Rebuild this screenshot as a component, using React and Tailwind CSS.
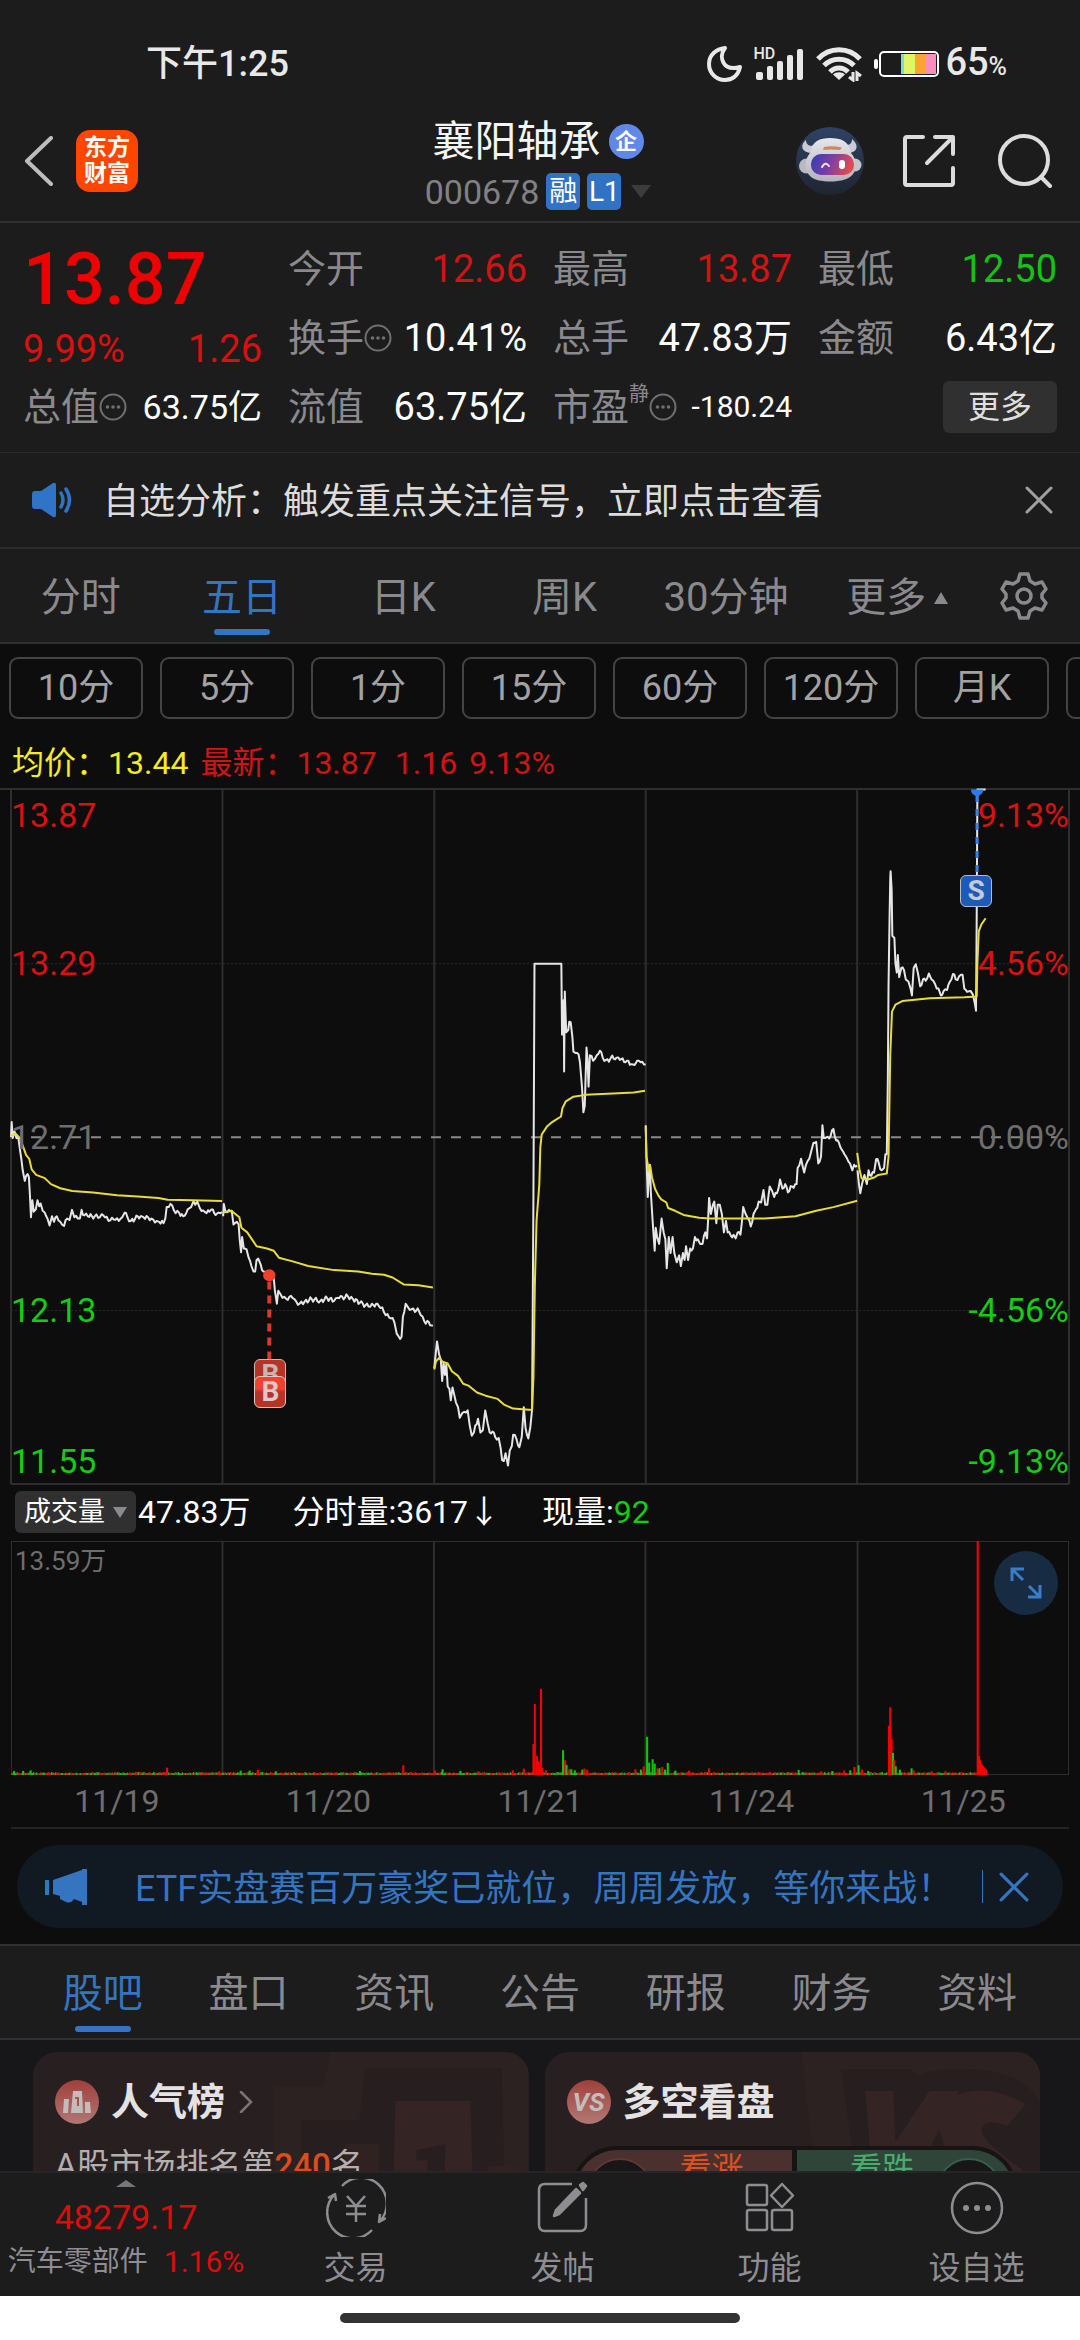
import React from "react";

/* ---------- price chart data (x: 32..3104, y: 21..1532) ---------- */

const PRICE_DAYS = [
  "32,778 34,745 37,780 42,765 48,780 53,778 58,805 62,825 66,850 72,873 76,862 80,858 84,865 87,905 90,952 94,915 98,940 104,935 109,915 114,928 118,922 124,938 130,942 138,955 144,970 151,950 157,962 165,950 175,962 186,971 195,955 202,958 209,936 216,952 226,955 232,955 237,936 245,948 255,950 275,950 290,952 300,948 315,960 330,957 345,960 355,952 362,942 370,952 380,960 392,956 400,950 412,950 430,952 445,957 455,960 462,962 475,965 480,955 484,930 490,930 495,923 505,937 520,942 532,950 545,935 555,930 562,917 567,925 573,918 580,932 590,937 600,943 608,940 614,935 622,943 635,942 645,941",
  "648,950 650,923 654,938 665,936 673,938 678,968 682,965 688,962 693,968 696,1000 700,1028 703,995 708,1020 716,1022 722,1040 730,1058 736,1070 741,1070 745,1045 750,1042 757,1055 765,1070 775,1080 785,1080 795,1085 798,1110 804,1140 808,1112 815,1120 825,1125 832,1130 840,1125 850,1128 860,1135 870,1140 885,1135 905,1130 930,1134 950,1128 970,1134 985,1128 1010,1124 1025,1130 1045,1138 1070,1146 1080,1140 1100,1145 1110,1148 1120,1165 1135,1172 1145,1180 1152,1205 1158,1212 1166,1212 1170,1168 1178,1140 1185,1148 1195,1152 1205,1158 1213,1150 1222,1165 1232,1178 1245,1180 1257,1188",
  "1261,1280 1265,1250 1269,1222 1275,1250 1280,1262 1284,1308 1288,1268 1292,1295 1296,1272 1300,1320 1305,1325 1309,1350 1314,1322 1318,1335 1324,1355 1330,1365 1335,1388 1342,1378 1348,1375 1358,1372 1364,1405 1370,1427 1376,1420 1380,1405 1388,1390 1395,1420 1402,1415 1409,1372 1416,1400 1422,1420 1430,1418 1438,1430 1448,1432 1454,1455 1458,1480 1463,1482 1468,1465 1475,1492 1480,1460 1486,1450 1490,1425 1500,1435 1508,1452 1515,1430 1521,1365 1526,1410 1534,1433 1540,1408 1545,1370 1549,900 1552,401 1630,401 1632,555 1634,555 1637,480 1638,635 1640,461 1644,550 1650,545 1653,527 1657,528 1662,560 1665,592 1672,595 1680,598 1684,615 1690,670 1694,724 1698,710 1703,583 1706,610 1709,668 1713,600 1718,602 1722,612 1727,608 1733,600 1742,590 1750,605 1760,610 1768,614 1774,605 1790,605 1800,610 1820,612 1838,620 1850,612 1860,615 1870,620 1875,620",
  "1875,752 1877,820 1881,908 1885,850 1887,838 1890,900 1895,960 1901,1025 1904,975 1908,995 1914,1010 1921,955 1927,985 1932,1000 1936,1063 1942,995 1947,1030 1953,995 1958,1030 1965,1050 1972,1035 1977,1058 1983,1030 1988,1045 1992,1015 1998,1045 2004,1020 2012,1020 2018,995 2026,1000 2033,1010 2040,1010 2048,985 2053,998 2056,960 2059,910 2064,945 2070,925 2074,918 2080,965 2084,925 2090,925 2096,945 2102,985 2108,960 2113,985 2122,992 2130,990 2136,998 2142,985 2150,990 2158,930 2165,945 2172,955 2180,972 2188,945 2195,935 2203,918 2210,920 2217,893 2222,925 2228,925 2235,885 2242,895 2248,908 2256,900 2265,870 2272,890 2280,880 2288,898 2300,885 2313,880 2316,845 2326,825 2335,855 2345,830 2355,810 2362,790 2370,788 2376,835 2384,820 2388,752 2392,780 2400,778 2412,775 2420,760 2428,785 2436,790 2444,805 2452,815 2460,825 2468,835 2475,850 2480,838 2489,840",
  "2490,850 2494,880 2498,900 2503,880 2510,860 2517,880 2522,850 2530,862 2538,855 2544,826 2552,835 2560,850 2567,845 2571,815 2575,815 2578,650 2580,450 2583,300 2585,215 2586,200 2589,240 2591,340 2597,345 2600,400 2604,420 2607,382 2611,430 2617,410 2625,415 2630,435 2638,440 2644,455 2648,470 2653,410 2659,402 2665,420 2672,450 2680,435 2688,438 2697,422 2705,435 2715,445 2725,455 2732,470 2740,460 2750,458 2758,440 2767,423 2775,435 2785,428 2795,425 2800,455 2808,462 2818,460 2825,468 2830,485 2834,503 2836,300 2838,22 2862,22",
];

const AVG_DAYS = [
  "32,775 45,770 58,780 68,800 76,817 85,825 92,848 105,860 130,867 148,880 175,889 210,895 270,898 340,904 400,907 460,910 487,914 560,915 645,917",
  "648,942 672,938 695,952 701,975 718,985 745,1015 775,1020 795,1025 810,1040 850,1048 895,1058 970,1067 1040,1070 1080,1075 1115,1077 1140,1083 1172,1098 1215,1100 1257,1105",
  "1261,1283 1266,1265 1275,1258 1285,1266 1300,1270 1312,1287 1330,1297 1345,1314 1360,1318 1385,1333 1410,1340 1445,1347 1465,1360 1490,1368 1545,1371 1549,1300 1553,1100 1558,960 1566,880 1569,800 1573,772 1588,755 1600,747 1610,742 1629,733 1633,715 1643,700 1665,690 1700,686 1780,683 1840,681 1873,677",
  "1875,755 1877,820 1884,850 1888,840 1893,865 1902,890 1912,905 1920,913 1935,920 1940,932 1960,938 1985,947 2030,953 2060,955 2120,955 2220,955 2310,950 2370,938 2420,930 2489,916",
  "2489,812 2496,850 2502,868 2520,870 2540,865 2550,860 2575,857 2580,820 2585,600 2590,505 2600,490 2620,482 2700,476 2800,474 2836,472 2838,400 2842,330 2850,315 2862,302",
];

/* Small deterministic ripple between the recorded points of the price line. */
function ripple(series) {
  const pts = series.split(" ").map((p) => p.split(",").map(Number));
  const out = [pts[0]];
  for (let i = 1; i < pts.length; i++) {
    const [x0, y0] = pts[i - 1];
    const [x1, y1] = pts[i];
    const n = y0 === y1 && x1 - x0 > 20 && y0 < 500 ? 1 : Math.floor((x1 - x0) / 4);
    for (let k = 1; k < n; k++) {
      const wob = Math.sin((x0 + k * 4) * 12.9898) * 5;
      out.push([x0 + ((x1 - x0) * k) / n, y0 + ((y1 - y0) * k) / n + wob]);
    }
    out.push([x1, y1]);
  }
  return out.map((p) => p.map((v) => Math.round(v * 10) / 10).join(",")).join(" ");
}

/* ---------- volume data (x: 16..1552, y: 184..882) ---------- */

const UP = "#f00505";
const DOWN = "#12c412";
const VOLUME_PEAKS = [
  [20, 870, DOWN], [33, 870, DOWN], [44, 868, DOWN], [242, 860, UP], [318, 871, UP], [349, 869, DOWN], [362, 869, DOWN],
  [374, 867, UP], [400, 871, DOWN], [522, 870, DOWN], [585, 853, UP], [631, 869, UP], [642, 865, DOWN], [668, 870, DOWN],
  [694, 871, UP], [744, 868, UP], [760, 863, UP], [774, 790, UP], [776, 670, UP], [779, 825, UP], [781, 840, UP],
  [783, 858, UP], [785, 625, UP], [787, 860, UP], [792, 868, UP], [817, 808, DOWN], [820, 838, UP], [822, 852, DOWN],
  [826, 865, UP], [829, 865, DOWN], [834, 868, DOWN], [845, 866, DOWN], [848, 863, UP], [852, 866, UP], [922, 865, UP],
  [930, 866, DOWN], [934, 856, UP], [939, 768, DOWN], [942, 845, DOWN], [947, 835, DOWN], [950, 848, DOWN], [954, 862, UP],
  [957, 862, DOWN], [961, 858, UP], [965, 866, DOWN], [969, 846, DOWN], [980, 869, DOWN], [1000, 869, UP], [1029, 862, UP],
  [1159, 867, DOWN], [1192, 871, UP], [1208, 870, DOWN], [1225, 869, UP], [1234, 868, DOWN], [1240, 858, UP],
  [1246, 853, DOWN], [1251, 866, UP], [1260, 870, DOWN], [1290, 735, UP], [1292, 680, UP], [1294, 775, UP],
  [1296, 816, DOWN], [1298, 838, UP], [1300, 856, DOWN], [1306, 866, DOWN], [1323, 862, DOWN], [1326, 868, UP],
  [1352, 871, UP], [1372, 871, UP], [1419, 184, UP], [1421, 825, UP], [1423, 838, UP], [1425, 850, UP], [1427, 855, UP],
  [1429, 860, UP], [1431, 865, UP],
];

const BASE_BARS = Array.from({ length: 703 }, (_, i) => {
  const n = Math.abs(Math.sin(i * 78.233) * 43758.5453) % 1;
  const h = 6 + Math.round(n * n * 3);
  return { x: 16 + i * 2, h, c: (n * 10) % 1 > 0.6 ? "#38a814" : "#d0240a" };
});

/* ---------- small shared icons ---------- */

function Close({ className }) {
  return (
    <svg viewBox="0 0 28 28" className={className} fill="none" stroke="currentColor" strokeWidth="3" strokeLinecap="round" aria-hidden="true">
      <path d="M2 2 26 26M26 2 2 26" />
    </svg>
  );
}

function Info() {
  return (
    <svg viewBox="0 0 28 28" className="size-7 shrink-0 text-[#707072]" aria-hidden="true">
      <circle cx="14" cy="14" r="12.5" fill="none" stroke="currentColor" strokeWidth="2" />
      <g fill="currentColor">
        <circle cx="8.5" cy="14" r="1.8" />
        <circle cx="14" cy="14" r="1.8" />
        <circle cx="19.5" cy="14" r="1.8" />
      </g>
    </svg>
  );
}

/* ---------- sections ---------- */

function StatusBar() {
  return (
    <div className="flex h-[100px] items-center justify-between pt-7 pr-[73px] pl-[146px] text-[#e8e8e8]">
      <span className="text-[36px] leading-[44px] font-medium">下午1:25</span>
      <div className="flex items-center">
        <svg viewBox="0 0 36 36" className="mr-[10px] size-9" fill="none" stroke="currentColor" strokeWidth="4" strokeLinejoin="round" aria-hidden="true">
          <path d="M18 2C11 11 16 26 33 21C31 30 25 34 18 34C9 34 2 27 2 18C2 9 9 3 18 2Z" />
        </svg>
        <div className="relative h-9 w-[52px]">
          <span className="absolute top-0 left-0 text-[16px] leading-4 font-medium">HD</span>
          <svg viewBox="0 0 52 36" className="h-9 w-[52px]" fill="currentColor" aria-hidden="true">
            <rect x="3" y="26" width="7" height="8" rx="2" />
            <rect x="14" y="20" width="6" height="14" rx="2" />
            <rect x="24" y="15" width="6" height="19" rx="2" />
            <rect x="34" y="9" width="6" height="25" rx="2" />
            <rect x="44" y="3" width="6" height="31" rx="2" />
          </svg>
        </div>
        <svg viewBox="0 0 46 36" className="mr-[12px] ml-[11px] h-9 w-[46px]" aria-hidden="true">
          <g fill="none" stroke="currentColor" strokeWidth="5">
            <path d="M2 13C13 .5 33 .5 44 13" />
            <path d="M8 19.500C16 11 30 11 38 19.500" />
            <path d="M14 26C19 20.500 27 20.500 32 26" />
          </g>
          <path d="M23 34 17 28.500C20 25.500 26 25.500 29 28.500Z" fill="currentColor" />
          <path d="M37 26V34L33 31M41 35V27L45 30" fill="none" stroke="currentColor" strokeWidth="3" />
        </svg>
        <svg viewBox="0 0 66 28" className="h-7 w-[66px]" aria-hidden="true">
          <rect x="0" y="9" width="4" height="10" rx="2" fill="#fff" />
          <rect x="6" y="2" width="58" height="24" rx="4" fill="none" stroke="#fff" strokeWidth="2" />
          <rect x="27" y="4" width="3" height="20" fill="#6fe3d2" />
          <rect x="30" y="4" width="11" height="20" fill="#e2f564" />
          <rect x="41" y="4" width="11" height="20" fill="#f9a52f" />
          <rect x="52" y="4" width="10" height="20" fill="#f78fbe" />
        </svg>
        <span className="ml-[5px] text-[38px] leading-[44px] font-medium">
          65<span className="text-[25px]">%</span>
        </span>
      </div>
    </div>
  );
}

function Mascot() {
  return (
    <svg viewBox="0 0 68 68" className="size-[68px]" aria-hidden="true">
      <defs>
        <linearGradient id="mascot-bg" x1="0" y1="0" x2="0" y2="1">
          <stop offset="0" stopColor="#2f4266" />
          <stop offset="1" stopColor="#1f2530" />
        </linearGradient>
        <linearGradient id="mascot-visor" x1="0" y1="0" x2="1" y2="0.2">
          <stop offset="0" stopColor="#2f3fb0" />
          <stop offset="0.5" stopColor="#7b3da8" />
          <stop offset="1" stopColor="#e04a50" />
        </linearGradient>
        <linearGradient id="mascot-head" x1="0" y1="0" x2="0" y2="1">
          <stop offset="0" stopColor="#e6e6ec" />
          <stop offset="1" stopColor="#b4b2ba" />
        </linearGradient>
      </defs>
      <circle cx="34" cy="34" r="34" fill="url(#mascot-bg)" />
      <path d="M10 13C5 17 4 24 14 26L20 18C14 20 10 18 10 13ZM56 12C62 17 63 24 54 26L47 17C53 19 56 17 56 12Z" fill="#c9cad4" />
      <circle cx="10.500" cy="39" r="7.500" fill="#b9b9c2" />
      <circle cx="59" cy="38" r="6.500" fill="#c4c4cc" />
      <path d="M14 26C16 14 24 11 34 11C45 11 53 14 55 26C62 33 61 46 54 50C46 56 22 56 15 50C8 44 8 33 14 26Z" fill="url(#mascot-head)" />
      <path d="M28 20Q36 18.500 46 20.500L44 23Q35 22 27 23Z" fill="#c98b5c" />
      <rect x="15" y="27" width="43" height="21" rx="10" fill="url(#mascot-visor)" />
      <path d="M26 40Q29.500 34 33 39" fill="none" stroke="#f4e8ff" strokeWidth="2" strokeLinecap="round" />
      <rect x="43" y="33" width="6" height="9" rx="3" fill="#fff" />
    </svg>
  );
}

function Header() {
  return (
    <header className="grid h-[123px] grid-cols-[1fr_auto_1fr] items-center border-b-2 border-[#303030] pr-7 pl-6">
      <div className="flex items-center gap-[22px]">
        <button aria-label="返回" className="text-[#bdbdbd]">
          <svg viewBox="0 0 30 50" className="h-[50px] w-[30px]" fill="none" stroke="currentColor" strokeWidth="4" strokeLinecap="round" strokeLinejoin="round" aria-hidden="true">
            <path d="M27 2 3 25 27 48" />
          </svg>
        </button>
        <a href="#home" className="flex size-[62px] flex-col items-center justify-center rounded-[14px] bg-[#ff4600] text-[23px] leading-[26px] font-bold text-white">
          <span>东方</span>
          <span>财富</span>
        </a>
      </div>
      <div className="flex flex-col items-center pt-2">
        <h1 className="flex items-center gap-2 text-[42px] leading-[54px] text-[#f4f4f4]">
          襄阳轴承
          <span className="flex size-[35px] items-center justify-center rounded-full bg-[#5f88e8] text-[22px] leading-none font-bold text-white">企</span>
        </h1>
        <div className="flex items-center gap-[7px] text-[34px] leading-[46px] text-[#808085]">
          000678
          <span className="flex h-[37px] w-[34px] items-center justify-center rounded-[5px] bg-[#3072c4] text-[28px] leading-none text-white">融</span>
          <span className="flex h-[37px] w-[34px] items-center justify-center rounded-[5px] bg-[#3072c4] text-[28px] leading-none text-white">L1</span>
          <svg viewBox="0 0 20 13" className="ml-[3px] h-[13px] w-5" fill="#3c3c3c" aria-hidden="true">
            <path d="M0 0H20L10 13Z" />
          </svg>
        </div>
      </div>
      <div className="flex items-center justify-end text-[#dcdcdc]">
        <button aria-label="智能助手" className="mr-[38px]">
          <Mascot />
        </button>
        <button aria-label="分享" className="mr-[42px]">
          <svg viewBox="0 0 54 54" className="size-[54px]" fill="none" stroke="currentColor" strokeWidth="4" strokeLinecap="round" strokeLinejoin="round" aria-hidden="true">
            <path d="M21 3H5Q3 3 3 5V49Q3 51 5 51H49Q51 51 51 49V34M33 3H51V20M51 3 25 29" />
          </svg>
        </button>
        <button aria-label="搜索">
          <svg viewBox="0 0 54 54" className="size-[54px]" fill="none" stroke="currentColor" strokeWidth="4" strokeLinecap="round" aria-hidden="true">
            <circle cx="26" cy="26" r="24" />
            <path d="M43 43 52 52" />
          </svg>
        </button>
      </div>
    </header>
  );
}

function Stat({ label, info, sup, value, tone = "text-white", size = "text-[38px]" }) {
  return (
    <div className="flex items-center justify-between whitespace-nowrap">
      <dt className="flex items-center text-[38px] text-[#8a8a8e]">
        {label}
        {sup && <sup className="top-0 self-start text-[20px] leading-5">{sup}</sup>}
        {info && <Info />}
      </dt>
      <dd className={`${size} ${tone}`}>{value}</dd>
    </div>
  );
}

function Quote() {
  return (
    <dl className="grid auto-rows-[69px] grid-cols-4 gap-x-[26px] border-b border-[#2c2c2c] px-[23px] pt-[11px] pb-[11px] leading-[46px]">
      <div className="row-span-2 text-[#e60606]">
        <dd className="text-[72px] leading-[92px] font-medium text-[#f00000]">13.87</dd>
        <dd className="flex justify-between text-[38px] text-[#d81010]">
          <span>9.99%</span>
          <span>1.26</span>
        </dd>
      </div>
      <Stat label="今开" value="12.66" tone="text-[#d01414]" />
      <Stat label="最高" value="13.87" tone="text-[#d01414]" />
      <Stat label="最低" value="12.50" tone="text-[#14c414]" />
      <Stat label="换手" info value="10.41%" />
      <Stat label="总手" value="47.83万" />
      <Stat label="金额" value="6.43亿" />
      <Stat label="总值" info value="63.75亿" size="text-[34px]" />
      <Stat label="流值" value="63.75亿" />
      <Stat label="市盈" sup="静" info value="-180.24" size="text-[30px]" />
      <div className="flex items-center justify-end">
        <button className="h-[52px] w-[114px] rounded-[6px] bg-[#303030] text-[32px] text-[#dedede]">更多</button>
      </div>
    </dl>
  );
}

function Notice() {
  return (
    <div className="flex h-[96px] items-center border-b-2 border-[#2c2c2c] pr-[27px] pl-[31px]">
      <svg viewBox="0 0 42 36" className="h-9 w-[42px]" aria-hidden="true">
        <path d="M4 9H10L22 1Q25 0 25 3V33Q25 36 22 35L10 27H4Q1 27 1 24V12Q1 9 4 9Z" fill="#2f74c6" />
        <path d="M30 11Q34 18 30 25M35 7Q42 18 35 29" fill="none" stroke="#2f74c6" strokeWidth="3.500" strokeLinecap="round" />
      </svg>
      <p className="ml-[30px] flex-1 pt-1 text-[36px] leading-[48px] text-[#dcdcdc]">自选分析：触发重点关注信号，立即点击查看</p>
      <button aria-label="关闭提示" className="text-[#a0a0a0]">
        <Close className="size-7" />
      </button>
    </div>
  );
}

function PeriodTabs() {
  const tabs = ["分时", "五日", "日K", "周K", "30分钟"];
  return (
    <nav className="grid h-[95px] grid-cols-[repeat(6,1fr)_112px] border-b-2 border-[#303030] text-[40px] text-[#8a8a8e]">
      {tabs.map((t) => (
        <button key={t} className={`relative flex items-center justify-center pt-1 ${t === "五日" ? "text-[#3475c2]" : ""}`}>
          {t}
          {t === "五日" && <span className="absolute bottom-[7px] h-[6px] w-14 rounded-full bg-[#3475c2]" />}
        </button>
      ))}
      <button className="flex items-center justify-center gap-2 pt-1 pl-5">
        更多
        <svg viewBox="0 0 14 12" className="h-3 w-[14px]" fill="currentColor" aria-hidden="true">
          <path d="M7 0 14 12H0Z" />
        </svg>
      </button>
      <button aria-label="设置" className="flex items-center justify-center">
        <svg viewBox="0 0 48 48" className="size-12" fill="none" stroke="currentColor" strokeWidth="3.500" strokeLinejoin="round" aria-hidden="true">
          <path d="M20 2H28L30 9L35 12L42 10L46 17L42 22V26L46 31L42 38L35 36L30 39L28 46H20L18 39L13 36L6 38L2 31L6 26V22L2 17L6 10L13 12L18 9Z" />
          <circle cx="24" cy="24" r="7" />
        </svg>
      </button>
    </nav>
  );
}

function Intervals() {
  return (
    <div className="flex gap-[17px] overflow-hidden pt-[13px] pl-[9px] text-[36px] leading-none text-[#a2a2a4]">
      {["10分", "5分", "1分", "15分", "60分", "120分", "月K"].map((t) => (
        <button key={t} className="h-[62px] w-[134px] shrink-0 rounded-[9px] border-2 border-[#444444]">
          {t}
        </button>
      ))}
      <button aria-label="更多周期" className="h-[62px] w-[134px] shrink-0 rounded-[9px] border-2 border-[#444444]" />
    </div>
  );
}

function PriceChart() {
  return (
    <div className="relative mx-[11px] h-[695px] text-[34px] leading-10">
      <svg viewBox="32 21 3072 1511" preserveAspectRatio="none" className="absolute inset-0 h-full w-full overflow-visible" fill="none" role="img" aria-label="五日走势">
        <g stroke="#2e2e2e" strokeWidth="2">
          <path d="M0 21H3136M32 1532H3104M32 21V1532M646 21V1532M1261 21V1532M1875 21V1532M2489 21V1532M3104 21V1532" vectorEffect="non-scaling-stroke" />
        </g>
        <path d="M32 401H3104M32 1155H3104" stroke="#2c2c2c" strokeWidth="1" strokeDasharray="2 2" vectorEffect="non-scaling-stroke" />
        <path d="M90 778H3070" stroke="#8a8a8a" strokeWidth="2" strokeDasharray="10 10" vectorEffect="non-scaling-stroke" />
        {PRICE_DAYS.map((d, i) => (
          <polyline key={i} points={ripple(d)} stroke="#e6e6e6" strokeWidth="2" strokeLinejoin="round" vectorEffect="non-scaling-stroke" />
        ))}
        {AVG_DAYS.map((d, i) => (
          <polyline key={i} points={d} stroke="#e8dc3c" strokeWidth="2" strokeLinejoin="round" vectorEffect="non-scaling-stroke" />
        ))}
        <path d="M782 1092V1262" stroke="#d83a2c" strokeWidth="4" strokeDasharray="8 6" vectorEffect="non-scaling-stroke" />
        <ellipse cx="782" cy="1078" rx="18" ry="13" fill="#f0402c" />
        <path d="M2837 34V207" stroke="#3b82e6" strokeWidth="3" strokeDasharray="7 7" vectorEffect="non-scaling-stroke" />
        <path d="M2819 22A18 14 0 0 0 2855 22Z" fill="#2a7af0" />
      </svg>

      <span className="absolute top-[6px] left-0 text-[#d81212]">13.87</span>
      <span className="absolute top-1/4 left-0 -translate-y-1/2 text-[#d81212]">13.29</span>
      <span className="absolute top-1/2 left-0 -translate-y-1/2 text-[#6e6e6e]">12.71</span>
      <span className="absolute top-3/4 left-0 -translate-y-1/2 text-[#14cc14]">12.13</span>
      <span className="absolute bottom-[3px] left-0 text-[#14cc14]">11.55</span>
      <span className="absolute top-[6px] right-0 text-[#d81212]">9.13%</span>
      <span className="absolute top-1/4 right-0 -translate-y-1/2 text-[#d81212]">4.56%</span>
      <span className="absolute top-1/2 right-0 -translate-y-1/2 text-[#6e6e6e]">0.00%</span>
      <span className="absolute top-3/4 right-0 -translate-y-1/2 text-[#14cc14]">-4.56%</span>
      <span className="absolute right-0 bottom-[3px] text-[#14cc14]">-9.13%</span>

      <span className="absolute top-[82%] left-[23%] flex h-8 w-8 items-center justify-center rounded-[6px] border border-[#c9b8b6] bg-[#b83226] text-[28px] leading-none font-bold text-[#c8b4b2]">B</span>
      <span className="absolute top-[84.400%] left-[23%] flex h-8 w-8 items-center justify-center rounded-[6px] border border-[#e0c8c6] bg-linear-to-b from-[#f04030] from-40% to-[#b83226] to-50% text-[28px] leading-none font-bold text-[#dccaca]">B</span>
      <span className="absolute top-[12.400%] left-[90%] flex h-8 w-8 -translate-x-[3px] items-center justify-center rounded-[6px] border border-[#b4bccb] bg-[#1c5cb8] text-[28px] leading-none font-bold text-[#c4cad6]">S</span>
    </div>
  );
}

function VolumeChart() {
  return (
    <div className="mx-[11px]">
      <div className="relative h-[234px]">
        <svg viewBox="16 184 1536 698" preserveAspectRatio="none" className="absolute inset-0 h-full w-full" role="img" aria-label="成交量">
          <path d="M16 184H1552V882H16ZM323 184V882M630 184V882M937 184V882M1245 184V882" fill="none" stroke="#2e2e2e" strokeWidth="2" vectorEffect="non-scaling-stroke" />
          {BASE_BARS.map((b) => (
            <rect key={b.x} x={b.x} y={882 - b.h} width="2" height={b.h} fill={b.c} />
          ))}
          {VOLUME_PEAKS.map(([x, y, c]) => (
            <rect key={x} x={x - 1} y={y} width="3" height={882 - y} fill={c} />
          ))}
        </svg>
        <span className="absolute top-1 left-1 text-[26px] leading-8 text-[#6e6e6e]">13.59万</span>
        <button aria-label="全屏" className="absolute top-[10px] right-[11px] flex size-[64px] items-center justify-center rounded-full bg-[#172b42] text-[#3a7cc8]">
          <svg viewBox="0 0 32 32" className="size-8" fill="none" stroke="currentColor" strokeWidth="3" aria-hidden="true">
            <path d="M2 14V2H14M2 2 13 13M30 18V30H18M30 30 19 19" />
          </svg>
        </button>
      </div>
      <div className="grid h-[54px] grid-cols-5 items-center border-b-2 border-[#242424] text-center text-[32px] leading-10 text-[#6e6e6e]">
        {["11/19", "11/20", "11/21", "11/24", "11/25"].map((d) => (
          <span key={d}>{d}</span>
        ))}
      </div>
    </div>
  );
}

function Promo() {
  return (
    <div className="mx-[17px] mt-4 mb-4 flex h-[83px] items-center rounded-full bg-[#111922] pr-[34px] pl-7 text-[#3575c0]">
      <svg viewBox="0 0 42 38" className="h-[38px] w-[42px] shrink-0" fill="currentColor" aria-hidden="true">
        <path d="M0 12H4V27H0ZM8 12 37 2V1H42V37H37V34L29 31Q26 36 21 34L15 31V28L8 26Z" />
      </svg>
      <a href="#etf" className="ml-12 flex-1 pt-1 text-[36px] leading-[48px] whitespace-nowrap">ETF实盘赛百万豪奖已就位，周周发放，等你来战！</a>
      <span className="mr-4 h-[33px] w-px bg-[#3575c0]" />
      <button aria-label="关闭活动">
        <Close className="size-[30px]" />
      </button>
    </div>
  );
}

function InfoTabs() {
  return (
    <nav className="grid h-[96px] grid-cols-7 border-y-2 border-[#303030] bg-[#1c1c1c] px-[30px] text-[40px] text-[#8a8a8e]">
      {["股吧", "盘口", "资讯", "公告", "研报", "财务", "资料"].map((t) => (
        <button key={t} className={`relative flex items-center justify-center pt-1 ${t === "股吧" ? "text-[#3475c2]" : ""}`}>
          {t}
          {t === "股吧" && <span className="absolute bottom-[6px] h-[6px] w-14 rounded-full bg-[#3475c2]" />}
        </button>
      ))}
    </nav>
  );
}

function Cards() {
  return (
    <div className="grid min-h-0 flex-1 grid-cols-2 gap-4 overflow-hidden bg-[#17171a] pt-3 pr-10 pl-[33px]">
      <section className="relative h-[300px] overflow-hidden rounded-[24px] bg-[#271f20] px-[22px] pt-[28px]">
        <svg viewBox="0 0 495 300" className="absolute inset-0 h-full w-full" preserveAspectRatio="xMaxYMin slice" aria-hidden="true">
          <path d="M297 0H495V300H240V35H290Z" fill="#2b2221" />
          <path d="M332 16H468L476 300H268V68H326Z" fill="#271e1f" />
          <path d="M362 49H437L444 300H356Z" fill="#352424" />
          <path d="M312 92H346V300H300ZM455 114H486V300H455Z" fill="#2f2221" />
          <path d="M383 98 412 92 406 300H384V122H394V108L383 109Z" fill="#271e1f" />
        </svg>
        <h2 className="relative flex items-center text-[38px] leading-[44px] font-bold text-[#e4e2e2]">
          <svg viewBox="0 0 44 44" className="mr-3 size-11" aria-hidden="true">
            <defs>
              <linearGradient id="badge-red" x1="0" y1="0" x2="0" y2="1">
                <stop offset="0" stopColor="#a03f3b" />
                <stop offset="1" stopColor="#b07874" />
              </linearGradient>
            </defs>
            <circle cx="22" cy="22" r="22" fill="url(#badge-red)" />
            <path d="M9 19H14L13 33H8ZM18 11H27L28 33H16ZM30 22H35L36 33H30Z" fill="#c4bcbb" />
            <path d="M20 18H23V26" fill="none" stroke="#a85550" strokeWidth="2" />
          </svg>
          人气榜
          <svg viewBox="0 0 14 22" className="ml-[14px] h-[22px] w-[14px]" fill="none" stroke="#7c7474" strokeWidth="2.500" strokeLinecap="round" aria-hidden="true">
            <path d="M2 1 12 11 2 21" />
          </svg>
        </h2>
        <p className="relative mt-[18px] text-[33px] leading-[48px] text-[#b4aeae]">
          A股市场排名第<span className="font-medium text-[#dc4c1c]">240</span>名
        </p>
      </section>

      <section className="relative h-[300px] overflow-hidden rounded-[24px] bg-[#271f20] px-[22px] pt-[28px]">
        <svg viewBox="0 0 495 300" className="absolute inset-0 h-full w-full" preserveAspectRatio="xMaxYMin slice" aria-hidden="true">
          <path d="M256 0H495V300H290Z" fill="#2b2221" />
          <path d="M296 17H366L372 24Q400 12 450 20Q480 26 495 50V300H330L310 120Z" fill="#271e1f" />
          <path d="M320 39H348L350 90L384 39H414L362 140H328Z" fill="#352424" />
          <path d="M480 52Q440 30 410 44Q384 62 400 96Q412 120 440 130L470 170L480 120Q440 92 436 80Q436 64 462 74Z" fill="#352424" />
        </svg>
        <h2 className="relative flex items-center text-[38px] leading-[44px] font-bold text-[#e4e2e2]">
          <span className="mr-3 flex size-11 items-center justify-center rounded-full bg-linear-to-b from-[#a03f3b] to-[#b07874] text-[26px] leading-none text-[#c4bcbb] italic">VS</span>
          多空看盘
        </h2>
        <div className="relative mt-[22px] ml-1 flex h-[92px] gap-[5px] overflow-hidden rounded-full border-4 border-[#171415] bg-[#171415] text-[32px] leading-[38px]">
          <button className="flex flex-1 items-start gap-[27px] bg-[#4a302e] pl-3 text-[#dc5020]">
            <span className="mt-2 size-[66px] rounded-full border-2 border-[#5e3835] bg-[#191617]" />
            看涨
          </button>
          <button className="flex flex-1 items-start justify-end gap-[22px] bg-[#30453a] pr-3 text-[#48ac6c]">
            看跌
            <span className="mt-2 size-[66px] rounded-full border-2 border-[#35604a] bg-[#191617]" />
          </button>
        </div>
      </section>
    </div>
  );
}

const NAV = [
  {
    label: "交易",
    icon: (
      <>
        <path d="M16 7A25 25 0 0 1 54 42M46 51A25 25 0 0 1 8 16M2 19 9 15 10 22M60 39 53 43 54 35" />
        <path d="M21 17 30 27 39 17M30 27V43M20 27H40M20 35H40" />
      </>
    ),
  },
  {
    label: "发帖",
    icon: (
      <>
        <path d="M39 5H12Q6 5 6 11V46Q6 52 12 52H47Q53 52 53 46V19" />
        <path d="M43 10 47 14 26 35 21 37 23 31ZM47 6 50 4 53 7 50 11Z" fill="currentColor" />
      </>
    ),
  },
  {
    label: "功能",
    icon: (
      <>
        <rect x="7" y="6" width="20" height="20" rx="2" />
        <rect x="7" y="31" width="20" height="20" rx="2" />
        <rect x="32" y="31" width="20" height="20" rx="2" />
        <path d="M42 5 53 16.500 42 28 31 16.500Z" />
      </>
    ),
  },
  {
    label: "设自选",
    icon: (
      <>
        <circle cx="30" cy="29" r="25" />
        <g fill="currentColor" stroke="none">
          <circle cx="19" cy="29" r="3" />
          <circle cx="30" cy="29" r="3" />
          <circle cx="41" cy="29" r="3" />
        </g>
      </>
    ),
  },
];

function BottomNav() {
  return (
    <footer>
      <nav className="grid h-[125px] grid-cols-[252px_repeat(4,1fr)] border-t-2 border-[#262626] bg-[#1c1c1c] text-[#8e8e92]">
        <button className="flex flex-col items-center pt-[7px] text-[#dc0c0c]">
          <svg viewBox="0 0 20 7" className="h-[7px] w-5" fill="#77777b" aria-hidden="true">
            <path d="M10 0 20 7H0Z" />
          </svg>
          <span className="mt-2 text-[34px] leading-[44px]">48279.17</span>
          <span className="flex items-center gap-4 text-[30px] leading-[46px]">
            <span className="text-[28px] text-[#8e8e92]">汽车零部件</span>
            1.16%
          </span>
        </button>
        {NAV.map((n) => (
          <button key={n.label} className="flex flex-col items-center pt-[6px]">
            <svg viewBox="0 0 60 58" className="h-[58px] w-[60px]" fill="none" stroke="currentColor" strokeWidth="2.500" strokeLinejoin="round" aria-hidden="true">
              {n.icon}
            </svg>
            <span className="mt-2 text-[32px] leading-[46px]">{n.label}</span>
          </button>
        ))}
      </nav>
      <div className="flex h-[44px] justify-center bg-white pt-[17px]">
        <span className="h-[10px] w-[400px] rounded-full bg-[#333333]" />
      </div>
    </footer>
  );
}

export default function App() {
  return (
    <div className="flex h-screen flex-col overflow-hidden bg-[#0d0d0d] font-['Roboto','Noto_Sans_CJK_SC',sans-serif]">
      <div className="bg-[#1c1c1c]">
        <StatusBar />
        <Header />
        <Quote />
        <Notice />
        <PeriodTabs />
      </div>
      <Intervals />
      <p className="flex pt-[22px] pb-1 pl-3 text-[32px] leading-[44px] whitespace-pre text-[#d01414]">
        <span className="mr-3 text-[#f6ec20]">均价：13.44</span>
        <span className="mr-[18px]">最新：13.87</span>
        <span className="mr-3">1.16</span>
        <span>9.13%</span>
      </p>
      <PriceChart />
      <div className="flex items-center pt-[7px] pb-2 pl-[15px] text-[32px] leading-[42px] text-white">
        <button className="mr-[2px] flex h-[42px] items-center gap-2 rounded-[6px] bg-[#303030] px-[9px] text-[27px]">
          成交量
          <svg viewBox="0 0 14 11" className="h-[11px] w-[14px]" fill="#8a8a8e" aria-hidden="true">
            <path d="M0 0H14L7 11Z" />
          </svg>
        </button>
        <span className="mr-[42px]">47.83万</span>
        <span className="mr-[42px]">分时量:3617↓</span>
        <span>
          现量:<span className="text-[#14cc14]">92</span>
        </span>
      </div>
      <VolumeChart />
      <Promo />
      <InfoTabs />
      <Cards />
      <BottomNav />
    </div>
  );
}
